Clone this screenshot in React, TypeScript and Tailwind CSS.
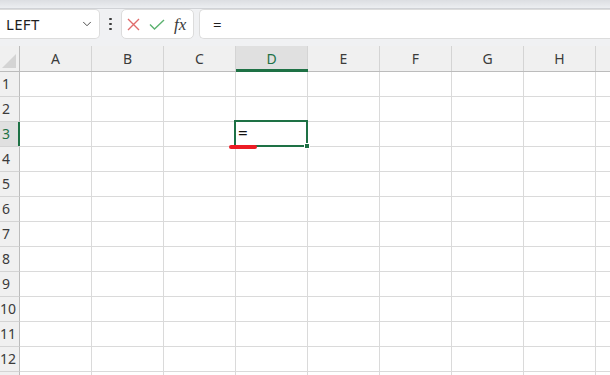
import { ChevronDown } from 'lucide-react';

const COLUMNS = ['A', 'B', 'C', 'D', 'E', 'F', 'G', 'H', ''];
const ROWS = [1, 2, 3, 4, 5, 6, 7, 8, 9, 10, 11, 12, 0];

const SELECTED_COL = 'D';
const SELECTED_ROW = 3;

function FormulaBar() {
  return (
    <div className="bg-[#f0f1f3]">
      <div className="h-[9px] bg-gradient-to-b from-[#dcdee2] to-[#eceef1] border-b border-[#d0d2d6]" />
      <div className="flex items-stretch h-[30px]">
        <div className="w-[100px] shrink-0 bg-white border border-l-0 border-[#dcdcdc] rounded-r-[5px] flex items-center justify-between pl-[6px] pr-[5px]">
          <span className="text-[15px] text-[#1f1f1f] tracking-[0.3px]">LEFT</span>
          <ChevronDown className="w-[14px] h-[14px] text-[#424242]" strokeWidth={1.6} />
        </div>
        <div className="w-[21px] shrink-0 flex flex-col items-center justify-center gap-[2.5px]">
          <span className="w-[2.5px] h-[2.5px] rounded-full bg-[#3c3c3c]" />
          <span className="w-[2.5px] h-[2.5px] rounded-full bg-[#3c3c3c]" />
          <span className="w-[2.5px] h-[2.5px] rounded-full bg-[#3c3c3c]" />
        </div>
        <div className="w-[73px] shrink-0 bg-white border border-[#dcdcdc] rounded-[5px] flex items-center pl-[5px] gap-[9px]">
          <svg width="13" height="13" viewBox="0 0 13 13">
            <path d="M1 1 L12 12 M12 1 L1 12" stroke="#e06c6c" strokeWidth="1.4" fill="none" />
          </svg>
          <svg width="16" height="11" viewBox="0 0 16 11">
            <path d="M1 5.5 L5.5 10 L15 1" stroke="#5cb270" strokeWidth="1.4" fill="none" />
          </svg>
          <span className="text-[17px] italic text-[#3a3a3a] leading-none" style={{ fontFamily: '"Liberation Serif", "DejaVu Serif", serif' }}>
            fx
          </span>
        </div>
        <div className="w-[5px] shrink-0" />
        <div className="flex-1 bg-white border border-r-0 border-[#dcdcdc] rounded-l-[5px] flex items-center pl-[13px]">
          <span className="text-[15px] text-[#1f1f1f]">=</span>
        </div>
      </div>
      <div className="h-[7px]" />
    </div>
  );
}

function HeaderRow() {
  return (
    <div className="flex h-[26px] bg-[#f0f0f0] border-b border-[#bcbcbc]">
      <div className="w-[20px] shrink-0 border-r border-[#bcbcbc] relative">
        <svg className="absolute right-[3px] bottom-[3px]" width="14" height="14" viewBox="0 0 14 14">
          <path d="M14 0 L14 14 L0 14 Z" fill="#d4d4d4" />
        </svg>
      </div>
      {COLUMNS.map((col, i) => {
        const active = col === SELECTED_COL;
        return (
          <div
            key={i}
            className={
              active
                ? 'w-[72px] shrink-0 border-r border-[#d4d4d4] bg-[#e0e0e0] relative flex items-center justify-center text-[14px] text-[#1e7145]'
                : 'w-[72px] shrink-0 border-r border-[#d4d4d4] flex items-center justify-center text-[14px] text-[#3b3b3b]'
            }
          >
            <span className="-mt-[1px]">{col}</span>
            {active && <div className="absolute left-0 -right-[1px] -bottom-[1px] h-[3px] bg-[#1e7145]" />}
          </div>
        );
      })}
    </div>
  );
}

function GridRow({ row }: { row: number }) {
  const activeRow = row === SELECTED_ROW;
  return (
    <div className="flex h-[25px]">
      <div
        className={
          activeRow
            ? 'w-[20px] shrink-0 bg-[#e0e0e0] border-b border-[#d4d4d4] relative flex items-center text-[14px] text-[#1e7145]'
            : 'w-[20px] shrink-0 bg-[#f0f0f0] border-r border-[#bcbcbc] border-b border-b-[#d4d4d4] flex items-center text-[14px] text-[#3b3b3b]'
        }
      >
        <span className="w-[12px] text-center whitespace-nowrap -mt-[1px]">{row > 0 ? row : ''}</span>
        {activeRow && <div className="absolute right-0 top-0 bottom-0 w-[2px] bg-[#1e7145]" />}
      </div>
      {COLUMNS.map((col, i) => {
        const selected = activeRow && col === SELECTED_COL;
        return (
          <div key={i} className="w-[72px] shrink-0 border-r border-b border-[#dadada] relative">
            {selected && (
              <>
                <div className="absolute -left-[2px] -top-[2px] -right-[1px] -bottom-[1px] border-2 border-[#1e7145] z-10" />
                <span className="absolute left-[2px] top-[1px] text-[17px] leading-[20px] text-[#111] z-10">=</span>
                <div className="absolute -right-[3px] -bottom-[3px] w-[6px] h-[6px] bg-[#1e7145] border border-white z-20" />
              </>
            )}
          </div>
        );
      })}
    </div>
  );
}

export default function App() {
  return (
    <div
      className="w-[610px] h-[375px] overflow-hidden bg-white relative"
      style={{ fontFamily: '"Noto Sans", "Open Sans", "Liberation Sans", sans-serif' }}
    >
      <FormulaBar />
      <HeaderRow />
      <div>
        {ROWS.map((r, i) => (
          <GridRow key={i} row={r} />
        ))}
      </div>
      {/* red annotation stroke under the active cell */}
      <div className="absolute left-[229px] top-[145px] w-[28px] h-[4px] rounded-full bg-[#ec1c24] z-30" />
    </div>
  );
}
